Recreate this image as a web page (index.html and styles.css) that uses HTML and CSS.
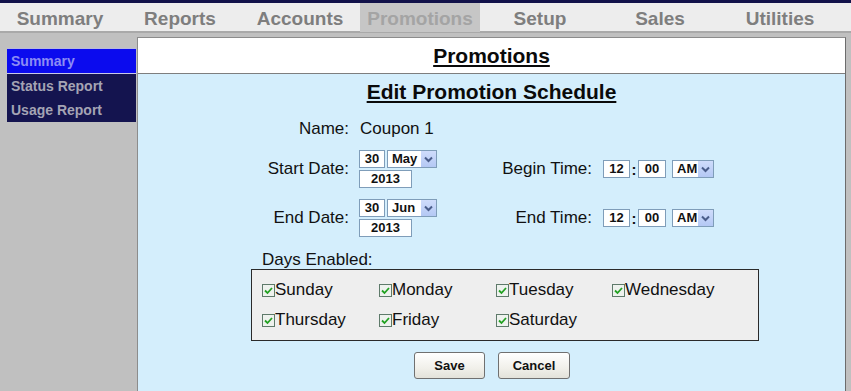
FILE: index.html
```html
<!DOCTYPE html>
<html>
<head>
<meta charset="utf-8">
<title>Promotions</title>
<link rel="stylesheet" href="styles.css">
</head>
<body>
<div class="topbar"></div>
<nav class="tabs">
  <div class="tab">Summary</div>
  <div class="tab">Reports</div>
  <div class="tab">Accounts</div>
  <div class="tab active">Promotions</div>
  <div class="tab">Setup</div>
  <div class="tab">Sales</div>
  <div class="tab">Utilities</div>
</nav>
<div class="layout">
  <aside class="side">
    <ul class="menu">
      <li class="active">Summary</li>
      <li>Status Report</li>
      <li>Usage Report</li>
    </ul>
  </aside>
  <main class="panel">
    <header class="panel-head"><h1>Promotions</h1></header>
    <section class="panel-body">
      <h2>Edit Promotion Schedule</h2>
      <div class="form">
        <div class="lbl">Name:</div>
        <div class="val">Coupon 1</div>
        <div></div>
        <div></div>

        <div class="lbl">Start Date:</div>
        <div class="date">
          <div class="line">
            <span class="box day">30</span>
            <span class="sel month"><span class="seltxt">May</span><svg class="arr" width="15" height="16" viewBox="0 0 15 16"><path d="M4 6.5 L7.5 10 L11 6.5" fill="none" stroke="#4a5d8a" stroke-width="2"/></svg></span>
          </div>
          <span class="box year">2013</span>
        </div>
        <div class="lbl">Begin Time:</div>
        <div class="time">
          <span class="box hh">12</span><span class="colon">:</span><span class="box mm">00</span>
          <span class="sel ampm"><span class="seltxt">AM</span><svg class="arr" width="15" height="16" viewBox="0 0 15 16"><path d="M4 6.5 L7.5 10 L11 6.5" fill="none" stroke="#4a5d8a" stroke-width="2"/></svg></span>
        </div>

        <div class="lbl">End Date:</div>
        <div class="date">
          <div class="line">
            <span class="box day">30</span>
            <span class="sel month"><span class="seltxt">Jun</span><svg class="arr" width="15" height="16" viewBox="0 0 15 16"><path d="M4 6.5 L7.5 10 L11 6.5" fill="none" stroke="#4a5d8a" stroke-width="2"/></svg></span>
          </div>
          <span class="box year">2013</span>
        </div>
        <div class="lbl">End Time:</div>
        <div class="time">
          <span class="box hh">12</span><span class="colon">:</span><span class="box mm">00</span>
          <span class="sel ampm"><span class="seltxt">AM</span><svg class="arr" width="15" height="16" viewBox="0 0 15 16"><path d="M4 6.5 L7.5 10 L11 6.5" fill="none" stroke="#4a5d8a" stroke-width="2"/></svg></span>
        </div>
      </div>

      <div class="days-label">Days Enabled:</div>
      <div class="days">
        <label class="day-opt"><svg class="cb" width="13" height="13" viewBox="0 0 13 13"><rect x="0.5" y="0.5" width="12" height="12" fill="#eef2ee" stroke="#5e7a6a"/><path d="M3 6.5 L5.5 9 L10 4" fill="none" stroke="#21a121" stroke-width="1.8"/></svg>Sunday</label>
        <label class="day-opt"><svg class="cb" width="13" height="13" viewBox="0 0 13 13"><rect x="0.5" y="0.5" width="12" height="12" fill="#eef2ee" stroke="#5e7a6a"/><path d="M3 6.5 L5.5 9 L10 4" fill="none" stroke="#21a121" stroke-width="1.8"/></svg>Monday</label>
        <label class="day-opt"><svg class="cb" width="13" height="13" viewBox="0 0 13 13"><rect x="0.5" y="0.5" width="12" height="12" fill="#eef2ee" stroke="#5e7a6a"/><path d="M3 6.5 L5.5 9 L10 4" fill="none" stroke="#21a121" stroke-width="1.8"/></svg>Tuesday</label>
        <label class="day-opt"><svg class="cb" width="13" height="13" viewBox="0 0 13 13"><rect x="0.5" y="0.5" width="12" height="12" fill="#eef2ee" stroke="#5e7a6a"/><path d="M3 6.5 L5.5 9 L10 4" fill="none" stroke="#21a121" stroke-width="1.8"/></svg>Wednesday</label>
        <label class="day-opt"><svg class="cb" width="13" height="13" viewBox="0 0 13 13"><rect x="0.5" y="0.5" width="12" height="12" fill="#eef2ee" stroke="#5e7a6a"/><path d="M3 6.5 L5.5 9 L10 4" fill="none" stroke="#21a121" stroke-width="1.8"/></svg>Thursday</label>
        <label class="day-opt"><svg class="cb" width="13" height="13" viewBox="0 0 13 13"><rect x="0.5" y="0.5" width="12" height="12" fill="#eef2ee" stroke="#5e7a6a"/><path d="M3 6.5 L5.5 9 L10 4" fill="none" stroke="#21a121" stroke-width="1.8"/></svg>Friday</label>
        <label class="day-opt"><svg class="cb" width="13" height="13" viewBox="0 0 13 13"><rect x="0.5" y="0.5" width="12" height="12" fill="#eef2ee" stroke="#5e7a6a"/><path d="M3 6.5 L5.5 9 L10 4" fill="none" stroke="#21a121" stroke-width="1.8"/></svg>Saturday</label>
      </div>

      <div class="actions">
        <button class="btn save">Save</button>
        <button class="btn cancel">Cancel</button>
      </div>
    </section>
  </main>
</div>
</body>
</html>
```
FILE: styles.css
```css
* { box-sizing: border-box; }
html, body {
  margin: 0;
  padding: 0;
  height: 391px;
  overflow: hidden;
}
body {
  background: #c0c0c0;
  font-family: "Liberation Sans", Arial, sans-serif;
  color: #111;
}
.topbar {
  height: 3px;
  background: #12124a;
}
.tabs {
  display: grid;
  grid-template-columns: repeat(7, 120px);
  height: 30px;
  background: #ededed;
  border-bottom: 2px solid #a9a9a9;
}
.tab {
  font-weight: bold;
  font-size: 19px;
  color: #7e7e7e;
  text-align: center;
  line-height: 26px;
  padding-top: 3px;
}
.tab.active {
  background: #c6c6c6;
  color: #a4a4a4;
}
.layout {
  display: flex;
  height: 358px;
}
.side {
  width: 137px;
  flex: none;
  padding: 15px 0 0 7px;
}
.menu {
  list-style: none;
  margin: 0;
  padding: 0;
  width: 129px;
  background: #14144f;
  border-top: 1px solid #b8b8e0;
}
.menu li {
  font-weight: bold;
  font-size: 14px;
  color: #a4a4b4;
  height: 24px;
  line-height: 24px;
  padding-left: 4px;
}
.menu li.active {
  background: #0b0bee;
  color: #8c8cf4;
  border-bottom: 1px solid #c8c8e8;
  height: 25px;
}
.panel {
  width: 709px;
  flex: none;
  margin-top: 4px;
  border-left: 1px solid #8c8c8c;
  border-top: 1px solid #8c8c8c;
  border-right: 1px solid #6c6c6c;
  background: #d4eefc;
  display: flex;
  flex-direction: column;
}
.panel-head {
  background: #fff;
  height: 36px;
  border-bottom: 1px solid #7e7e7e;
}
h1 {
  margin: 0;
  font-size: 21px;
  line-height: 35px;
  text-align: center;
  text-decoration: underline;
  color: #0a0a0a;
}
.panel-body {
  flex: 1;
}
h2 {
  margin: 6px 0 0;
  font-size: 21px;
  line-height: 24px;
  text-align: center;
  text-decoration: underline;
  color: #0a0a0a;
}
.form {
  margin: 15px 0 0 111px;
  display: grid;
  grid-template-columns: 100px 113px 110px auto;
  grid-template-rows: 20px 38px 38px;
  column-gap: 10px;
  row-gap: 11px;
  align-items: center;
  font-size: 17px;
}
.lbl {
  text-align: right;
  white-space: nowrap;
}
.val {
  padding-left: 1px;
}
.date {
  display: flex;
  flex-direction: column;
  gap: 2px;
}
.line {
  display: flex;
  gap: 2px;
}
.box, .sel {
  height: 18px;
  background: #fff;
  border: 1px solid #7f9db9;
  font-size: 13px;
  font-weight: bold;
  line-height: 16px;
  color: #111;
}
.box {
  display: inline-block;
  text-align: center;
}
.day { width: 26px; }
.year { width: 53px; }
.sel {
  display: inline-flex;
  align-items: stretch;
  justify-content: space-between;
  padding-left: 4px;
}
.month { width: 50px; }
.ampm { width: 42px; margin-left: 6px; }
.seltxt { line-height: 16px; }
.arr {
  display: block;
  width: 15px;
  height: 16px;
  background: linear-gradient(#cfdcfb, #b4c8f4);
}
.time {
  display: flex;
  align-items: center;
  padding-left: 1px;
}
.hh { width: 27px; }
.mm { width: 28px; }
.colon {
  width: 8px;
  text-align: center;
  font-size: 15px;
  font-weight: bold;
}
.days-label {
  margin: 14px 0 0 124px;
  font-size: 17px;
  line-height: 18px;
}
.days {
  margin-left: 113px;
  width: 508px;
  height: 72px;
  background: #eeeeee;
  border: 1px solid #2a2a2a;
  padding: 10px 0 0 10px;
  display: grid;
  grid-template-columns: 117px 117px 116px auto;
  grid-auto-rows: 20px;
  row-gap: 10px;
}
.day-opt {
  display: flex;
  align-items: center;
  font-size: 17px;
  color: #111;
  white-space: nowrap;
}
.cb {
  flex: none;
  display: block;
}
.actions {
  margin-top: 11px;
  display: flex;
  justify-content: center;
  gap: 13px;
  padding-left: 1px;
}
.btn {
  height: 27px;
  border: 1px solid #707070;
  border-radius: 3px;
  background: linear-gradient(#ffffff, #f1f0ea 60%, #e3e2da);
  font-family: "Liberation Sans", Arial, sans-serif;
  font-weight: bold;
  font-size: 13px;
  color: #111;
  padding: 0;
}
.save { width: 71px; }
.cancel { width: 72px; }
```
